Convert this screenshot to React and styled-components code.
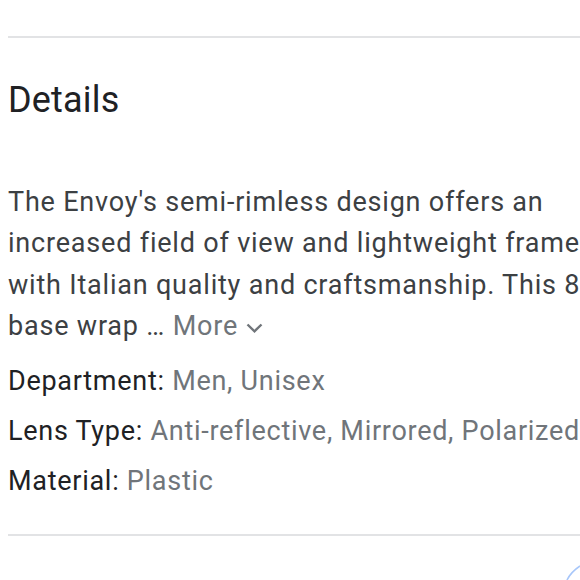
import React from "react";
import styled, { createGlobalStyle } from "styled-components";

const Global = createGlobalStyle`
  html, body { margin: 0; padding: 0; background: #fff; overflow: hidden; }
  body { font-family: Roboto, "Noto Sans", Arial, sans-serif; }
`;

const Page = styled.div`
  width: 580px;
  height: 580px;
  padding-left: 8px;
  box-sizing: border-box;
  position: relative;
  overflow: hidden;
`;

const Divider = styled.div`
  height: 2px;
  background: #e2e3e5;
  margin-top: ${(p) => p.$top}px;
  margin-right: -8px;
`;

const Heading = styled.h2`
  margin: 38px 0 0;
  font-size: 36px;
  line-height: 48px;
  font-weight: 400;
  color: #202124;
  letter-spacing: 0.2px;
`;

const Description = styled.p`
  margin: 58px 0 0;
  font-size: 27px;
  line-height: 41.3px;
  letter-spacing: 0.8px;
  color: #3c4043;
  width: 590px;
`;

const More = styled.span`
  color: #70757a;
  white-space: nowrap;
  svg { margin-left: 8px; vertical-align: 2px; }
`;

const Specs = styled.div`
  margin-top: 9px;
  display: flex;
  flex-direction: column;
`;

const SpecRow = styled.div`
  font-size: 27px;
  line-height: 50px;
  letter-spacing: 0.72px;
  white-space: nowrap;
  color: #202124;
`;

const SpecValue = styled.span`
  color: #70757a;
`;

const Spinner = styled.svg`
  position: absolute;
  right: 0;
  bottom: 0;
`;

const specs = [
  ["Department", "Men, Unisex"],
  ["Lens Type", "Anti-reflective, Mirrored, Polarized"],
  ["Material", "Plastic"],
];

export default function App() {
  return (
    <Page>
      <Global />
      <Divider $top={36} />
      <Heading>Details</Heading>
      <Description>
        The Envoy's semi-rimless design offers an increased field of view and
        lightweight frame with Italian quality and craftsmanship. This 8 base
        wrap …{" "}
        <More>
          More
          <svg width="17" height="10" viewBox="0 0 17 10">
            <path d="M1.5 1.5 L8.5 8.3 L15.5 1.5" fill="none" stroke="#70757a" strokeWidth="2.4" />
          </svg>
        </More>
      </Description>
      <Specs>
        {specs.map(([k, v]) => (
          <SpecRow key={k}>
            {k}: <SpecValue>{v}</SpecValue>
          </SpecRow>
        ))}
      </Specs>
      <Divider $top={28} />
      <Spinner width="14" height="16" viewBox="0 0 14 16">
        <path d="M1 16 Q5 8 14 2" fill="none" stroke="#a8c7fa" strokeWidth="1.6" />
      </Spinner>
    </Page>
  );
}
